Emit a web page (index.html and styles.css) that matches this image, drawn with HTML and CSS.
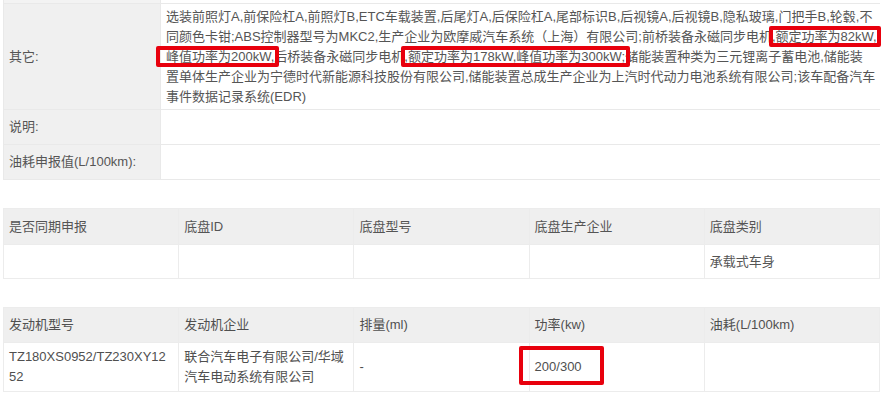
FILE: index.html
```html
<!DOCTYPE html>
<html lang="zh-CN">
<head>
<meta charset="utf-8">
<title>车辆参数</title>
<link rel="stylesheet" href="styles.css">
</head>
<body>
<div class="page">
  <div class="info">
    <div class="label cut"></div>
    <div class="value cut"></div>

    <div class="label">其它:</div>
    <div class="value long">选装前照灯A,前保险杠A,前照灯B,ETC车载装置,后尾灯A,后保险杠A,尾部标识B,后视镜A,后视镜B,隐私玻璃,门把手B,轮毂,不<br>同颜色卡钳;ABS控制器型号为MKC2,生产企业为欧摩威汽车系统（上海）有限公司;前桥装备永磁同步电机,<span class="mark m1">额定功率为82kW,</span><br><span class="mark m2">峰值功率为200kW,</span>后桥装备永磁同步电机,<span class="mark m3">额定功率为178kW,峰值功率为300kW;</span>储能装置种类为三元锂离子蓄电池,储能装<br>置单体生产企业为宁德时代新能源科技股份有限公司,储能装置总成生产企业为上汽时代动力电池系统有限公司;该车配备汽车<br>事件数据记录系统(EDR)</div>

    <div class="label row34">说明:</div>
    <div class="value row34"></div>

    <div class="label row34">油耗申报值(L/100km):</div>
    <div class="value row34"></div>
  </div>

  <div class="grid5 chassis">
    <div class="th">是否同期申报</div>
    <div class="th">底盘ID</div>
    <div class="th">底盘型号</div>
    <div class="th">底盘生产企业</div>
    <div class="th">底盘类别</div>
    <div class="td"></div>
    <div class="td"></div>
    <div class="td"></div>
    <div class="td"></div>
    <div class="td">承载式车身</div>
  </div>

  <div class="grid5 engine">
    <div class="th">发动机型号</div>
    <div class="th">发动机企业</div>
    <div class="th">排量(ml)</div>
    <div class="th">功率(kw)</div>
    <div class="th">油耗(L/100km)</div>
    <div class="td">TZ180XS0952/TZ230XY12<br>52</div>
    <div class="td">联合汽车电子有限公司/华域<br>汽车电动系统有限公司</div>
    <div class="td">-</div>
    <div class="td"><span class="mark m4">200/300</span></div>
    <div class="td"></div>
  </div>
</div>
</body>
</html>
```

FILE: styles.css
```css
html, body {
  margin: 0;
  padding: 0;
  background: #ffffff;
}

body {
  font-family: "Liberation Sans", "Noto Sans CJK SC", sans-serif;
  font-size: 13px;
  color: #555555;
}

.page {
  width: 877px;
  margin-left: 3px;
}

.info {
  display: grid;
  grid-template-columns: 156px 1fr;
  gap: 1px;
  background: #e9e9e9;
  padding: 0 1px 1px 1px;
}

.label {
  background: #f0f0f0;
  padding: 0 5px;
  display: flex;
  align-items: center;
  line-height: 20px;
}

.value {
  background: #ffffff;
  padding: 0 5px;
  line-height: 20px;
}

.cut {
  height: 3px;
  padding: 0;
}

.label.cut {
  background: #f3f3f3;
}

.value.long {
  padding: 3px 5px 2px 5px;
  white-space: nowrap;
}

.row34 {
  height: 34px;
}

.grid5 {
  display: grid;
  grid-template-columns: repeat(5, 1fr);
  gap: 1px;
  background: #ececec;
  padding: 1px;
  margin-top: 28px;
}

.th {
  background: #efefef;
  display: flex;
  align-items: center;
  padding: 0 5px;
  line-height: 20px;
}

.td {
  background: #ffffff;
  display: flex;
  align-items: center;
  padding: 0 5px;
  line-height: 20px;
}

.chassis .th { height: 35px; }
.chassis .td { height: 33px; }

.engine .th { height: 34px; }
.engine .td { height: 48px; }

.engine .td,
.engine .th {
  color: #4f4f4f;
}

.mark {
  position: relative;
}

.mark::after {
  content: "";
  position: absolute;
  border: 4px solid #e8000d;
  border-radius: 2px;
  pointer-events: none;
}

.m1::after { top: -3px; bottom: -3px; left: -7px; right: -4px; }
.m2::after { top: -3px; bottom: -3px; left: -10px; right: -5px; }
.m3::after { top: -3px; bottom: -3px; left: -7px; right: -5px; }

.m4::after {
  top: -11px;
  bottom: -8px;
  left: -16px;
  right: -22px;
}
```
